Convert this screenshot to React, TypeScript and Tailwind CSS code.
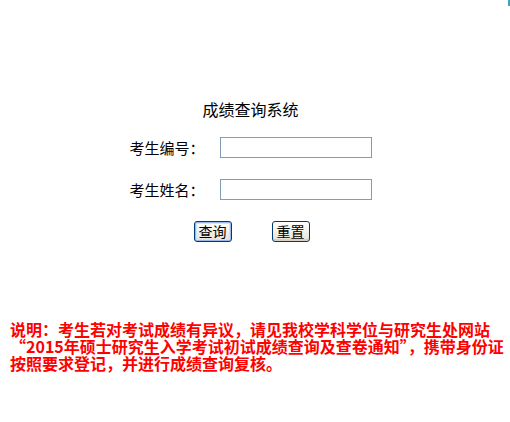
import React from 'react';

const cjk = { fontFamily: '"Noto Sans CJK SC", "Noto Sans", sans-serif' };

const Field: React.FC<{ label: string }> = ({ label }) => (
  <div className="flex items-center justify-center gap-[15px]">
    <span className="text-[15px] leading-[20px] text-black whitespace-nowrap">{label}</span>
    <input
      type="text"
      className="w-[152px] h-[21px] border border-[#7f9db9] bg-white px-1 text-[13px] outline-none"
    />
  </div>
);

const XpButton: React.FC<{ label: string; focused?: boolean }> = ({ label, focused }) => (
  <button
    className={`w-[38px] h-[21px] rounded-[3px] border border-[#003c74] bg-gradient-to-b from-white to-[#e6e3d6] text-[14px] leading-[17px] text-black ${
      focused ? 'shadow-[inset_0_0_0_1px_#98b8ea,inset_0_0_0_2px_#cee7ff]' : 'shadow-[inset_0_-2px_0_#d6d0c5]'
    }`}
  >
    {label}
  </button>
);

export default function App() {
  return (
    <div className="relative w-[510px] h-[422px] bg-white overflow-hidden" style={cjk}>
      <div className="absolute right-0 top-0 w-[2px] h-[6px] bg-[#3aa6b9]" />

      <div className="w-[501px] pt-[99px] flex flex-col items-center">
        <h1 className="text-[16px] leading-[20px] font-normal text-black">成绩查询系统</h1>

        <div className="mt-[18px] flex flex-col gap-[21px]">
          <Field label="考生编号：" />
          <Field label="考生姓名：" />
        </div>

        <div className="mt-[21px] flex gap-[40px] pl-[2px]">
          <XpButton label="查询" focused />
          <XpButton label="重置" />
        </div>
      </div>

      <p className="mt-[79px] pl-[10px] text-[16px] leading-[17px] font-bold text-[#ff0000] whitespace-nowrap">
        说明：考生若对考试成绩有异议，请见我校学科学位与研究生处网站
        <br />
        “2015年硕士研究生入学考试初试成绩查询及查卷通知”，携带身份证
        <br />
        按照要求登记，并进行成绩查询复核。
      </p>
    </div>
  );
}
